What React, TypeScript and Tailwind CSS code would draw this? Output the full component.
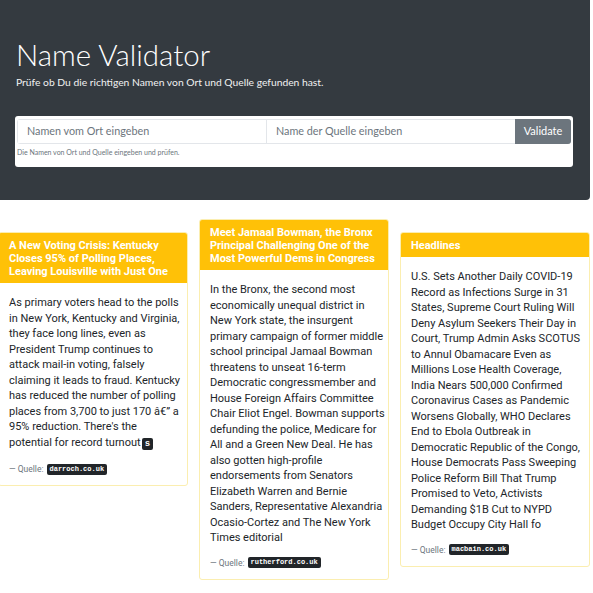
const sans = 'font-["Lato","Open_Sans",sans-serif]';
const cardFont = 'font-["Roboto","Lato",sans-serif]';

type Story = {
  title: string;
  lines: string[];
  source: string;
  kbd?: string;
  raised?: boolean;
};

// body text is kept in the lines it was laid out with on the source site
const stories: Story[] = [
  {
    title: 'A New Voting Crisis: Kentucky Closes 95% of Polling Places, Leaving Louisville with Just One',
    lines: [
      'As primary voters head to the polls',
      'in New York, Kentucky and Virginia,',
      'they face long lines, even as',
      'President Trump continues to',
      'attack mail-in voting, falsely',
      'claiming it leads to fraud. Kentucky',
      'has reduced the number of polling',
      'places from 3,700 to just 170 \u00e2\u20ac\u201d a',
      "95% reduction. There's the",
      'potential for record turnout',
    ],
    kbd: 's',
    source: 'darroch.co.uk',
  },
  {
    title: 'Meet Jamaal Bowman, the Bronx Principal Challenging One of the Most Powerful Dems in Congress',
    lines: [
      'In the Bronx, the second most',
      'economically unequal district in',
      'New York state, the insurgent',
      'primary campaign of former middle',
      'school principal Jamaal Bowman',
      'threatens to unseat 16-term',
      'Democratic congressmember and',
      'House Foreign Affairs Committee',
      'Chair Eliot Engel. Bowman supports',
      'defunding the police, Medicare for',
      'All and a Green New Deal. He has',
      'also gotten high-profile',
      'endorsements from Senators',
      'Elizabeth Warren and Bernie',
      'Sanders, Representative Alexandria',
      'Ocasio-Cortez and The New York',
      'Times editorial',
    ],
    source: 'rutherford.co.uk',
    raised: true,
  },
  {
    title: 'Headlines',
    lines: [
      'U.S. Sets Another Daily COVID-19',
      'Record as Infections Surge in 31',
      'States, Supreme Court Ruling Will',
      'Deny Asylum Seekers Their Day in',
      'Court, Trump Admin Asks SCOTUS',
      'to Annul Obamacare Even as',
      'Millions Lose Health Coverage,',
      'India Nears 500,000 Confirmed',
      'Coronavirus Cases as Pandemic',
      'Worsens Globally, WHO Declares',
      'End to Ebola Outbreak in',
      'Democratic Republic of the Congo,',
      'House Democrats Pass Sweeping',
      'Police Reform Bill That Trump',
      'Promised to Veto, Activists',
      'Demanding $1B Cut to NYPD',
      'Budget Occupy City Hall fo',
    ],
    source: 'macbain.co.uk',
  },
];

function StoryCard({ story }: { story: Story }) {
  const last = story.lines.length - 1;
  return (
    <div
      className={`flex flex-col rounded-[3px] border border-[#fbeeb0] bg-white ${cardFont} ${
        story.raised ? 'mt-0' : 'mt-[13px]'
      }`}
    >
      <div className="rounded-t-[2px] bg-[#ffc107] px-[10px] py-[5.5px] text-[11px] font-bold leading-[13px] text-white">
        {story.title}
      </div>
      <div className="px-[10px] pb-[10px] pt-[12px]">
        <p className="text-[11px] leading-[15.5px] text-[#212529]">
          {story.lines.map((line, i) => (
            <span key={i} className="block whitespace-nowrap">
              {line}
              {i === last && story.kbd && (
                <kbd className='ml-[1px] rounded-[2px] bg-[#212529] px-[3px] py-[1px] font-["Liberation_Mono",monospace] text-[9px] font-bold text-white'>
                  {story.kbd}
                </kbd>
              )}
            </span>
          ))}
        </p>
        <div className="mt-[11px] flex items-center gap-[3px] text-[8.5px] leading-[12px] text-[#6c757d]">
          <span>— Quelle:</span>
          <code className='rounded-[2px] bg-[#212529] px-[3px] py-[1px] font-["Liberation_Mono",monospace] text-[7px] font-bold leading-[9px] text-white'>
            {story.source}
          </code>
        </div>
      </div>
    </div>
  );
}

export default function App() {
  return (
    <div className={`min-h-[593px] w-[593px] overflow-hidden bg-white ${sans}`}>
      <header className="w-[590px] rounded-br-[4px] bg-[#343a40] px-[15px] pb-[33px] pt-[36px] text-white">
        <h1 className="pl-[1px] text-[29.5px] font-light leading-[38px]">Name Validator</h1>
        <p className="pl-[1px] text-[10.3px] leading-[16px] text-[#f1f1f1]">
          Prüfe ob Du die richtigen Namen von Ort und Quelle gefunden hast.
        </p>

        <form className="mt-[26px] w-[558px] rounded-[3px] bg-white px-[2px] pb-[10px] pt-[3px]">
          <div className="flex h-[25px] rounded-[3px] border border-[#e3e6ea]">
            <input
              className="w-0 flex-1 border-r border-[#e3e6ea] bg-white px-[9px] text-[10.8px] text-[#495057] outline-none placeholder:text-[#6c757d]"
              placeholder="Namen vom Ort eingeben"
            />
            <input
              className="w-0 flex-1 bg-white px-[9px] text-[10.8px] text-[#495057] outline-none placeholder:text-[#6c757d]"
              placeholder="Name der Quelle eingeben"
            />
            <button
              type="button"
              className="-my-px -mr-px w-[56px] rounded-r-[3px] bg-[#6c757d] text-[11px] text-white"
            >
              Validate
            </button>
          </div>
          <small className="mt-[3px] block text-[7px] leading-[10px] text-[#6c757d]">
            Die Namen von Ort und Quelle eingeben und prüfen.
          </small>
        </form>
      </header>

      <main className="-ml-[2px] mt-[19px] grid w-[592px] grid-cols-3 items-start gap-[11px]">
        {stories.map((s) => (
          <StoryCard key={s.source} story={s} />
        ))}
      </main>
    </div>
  );
}
